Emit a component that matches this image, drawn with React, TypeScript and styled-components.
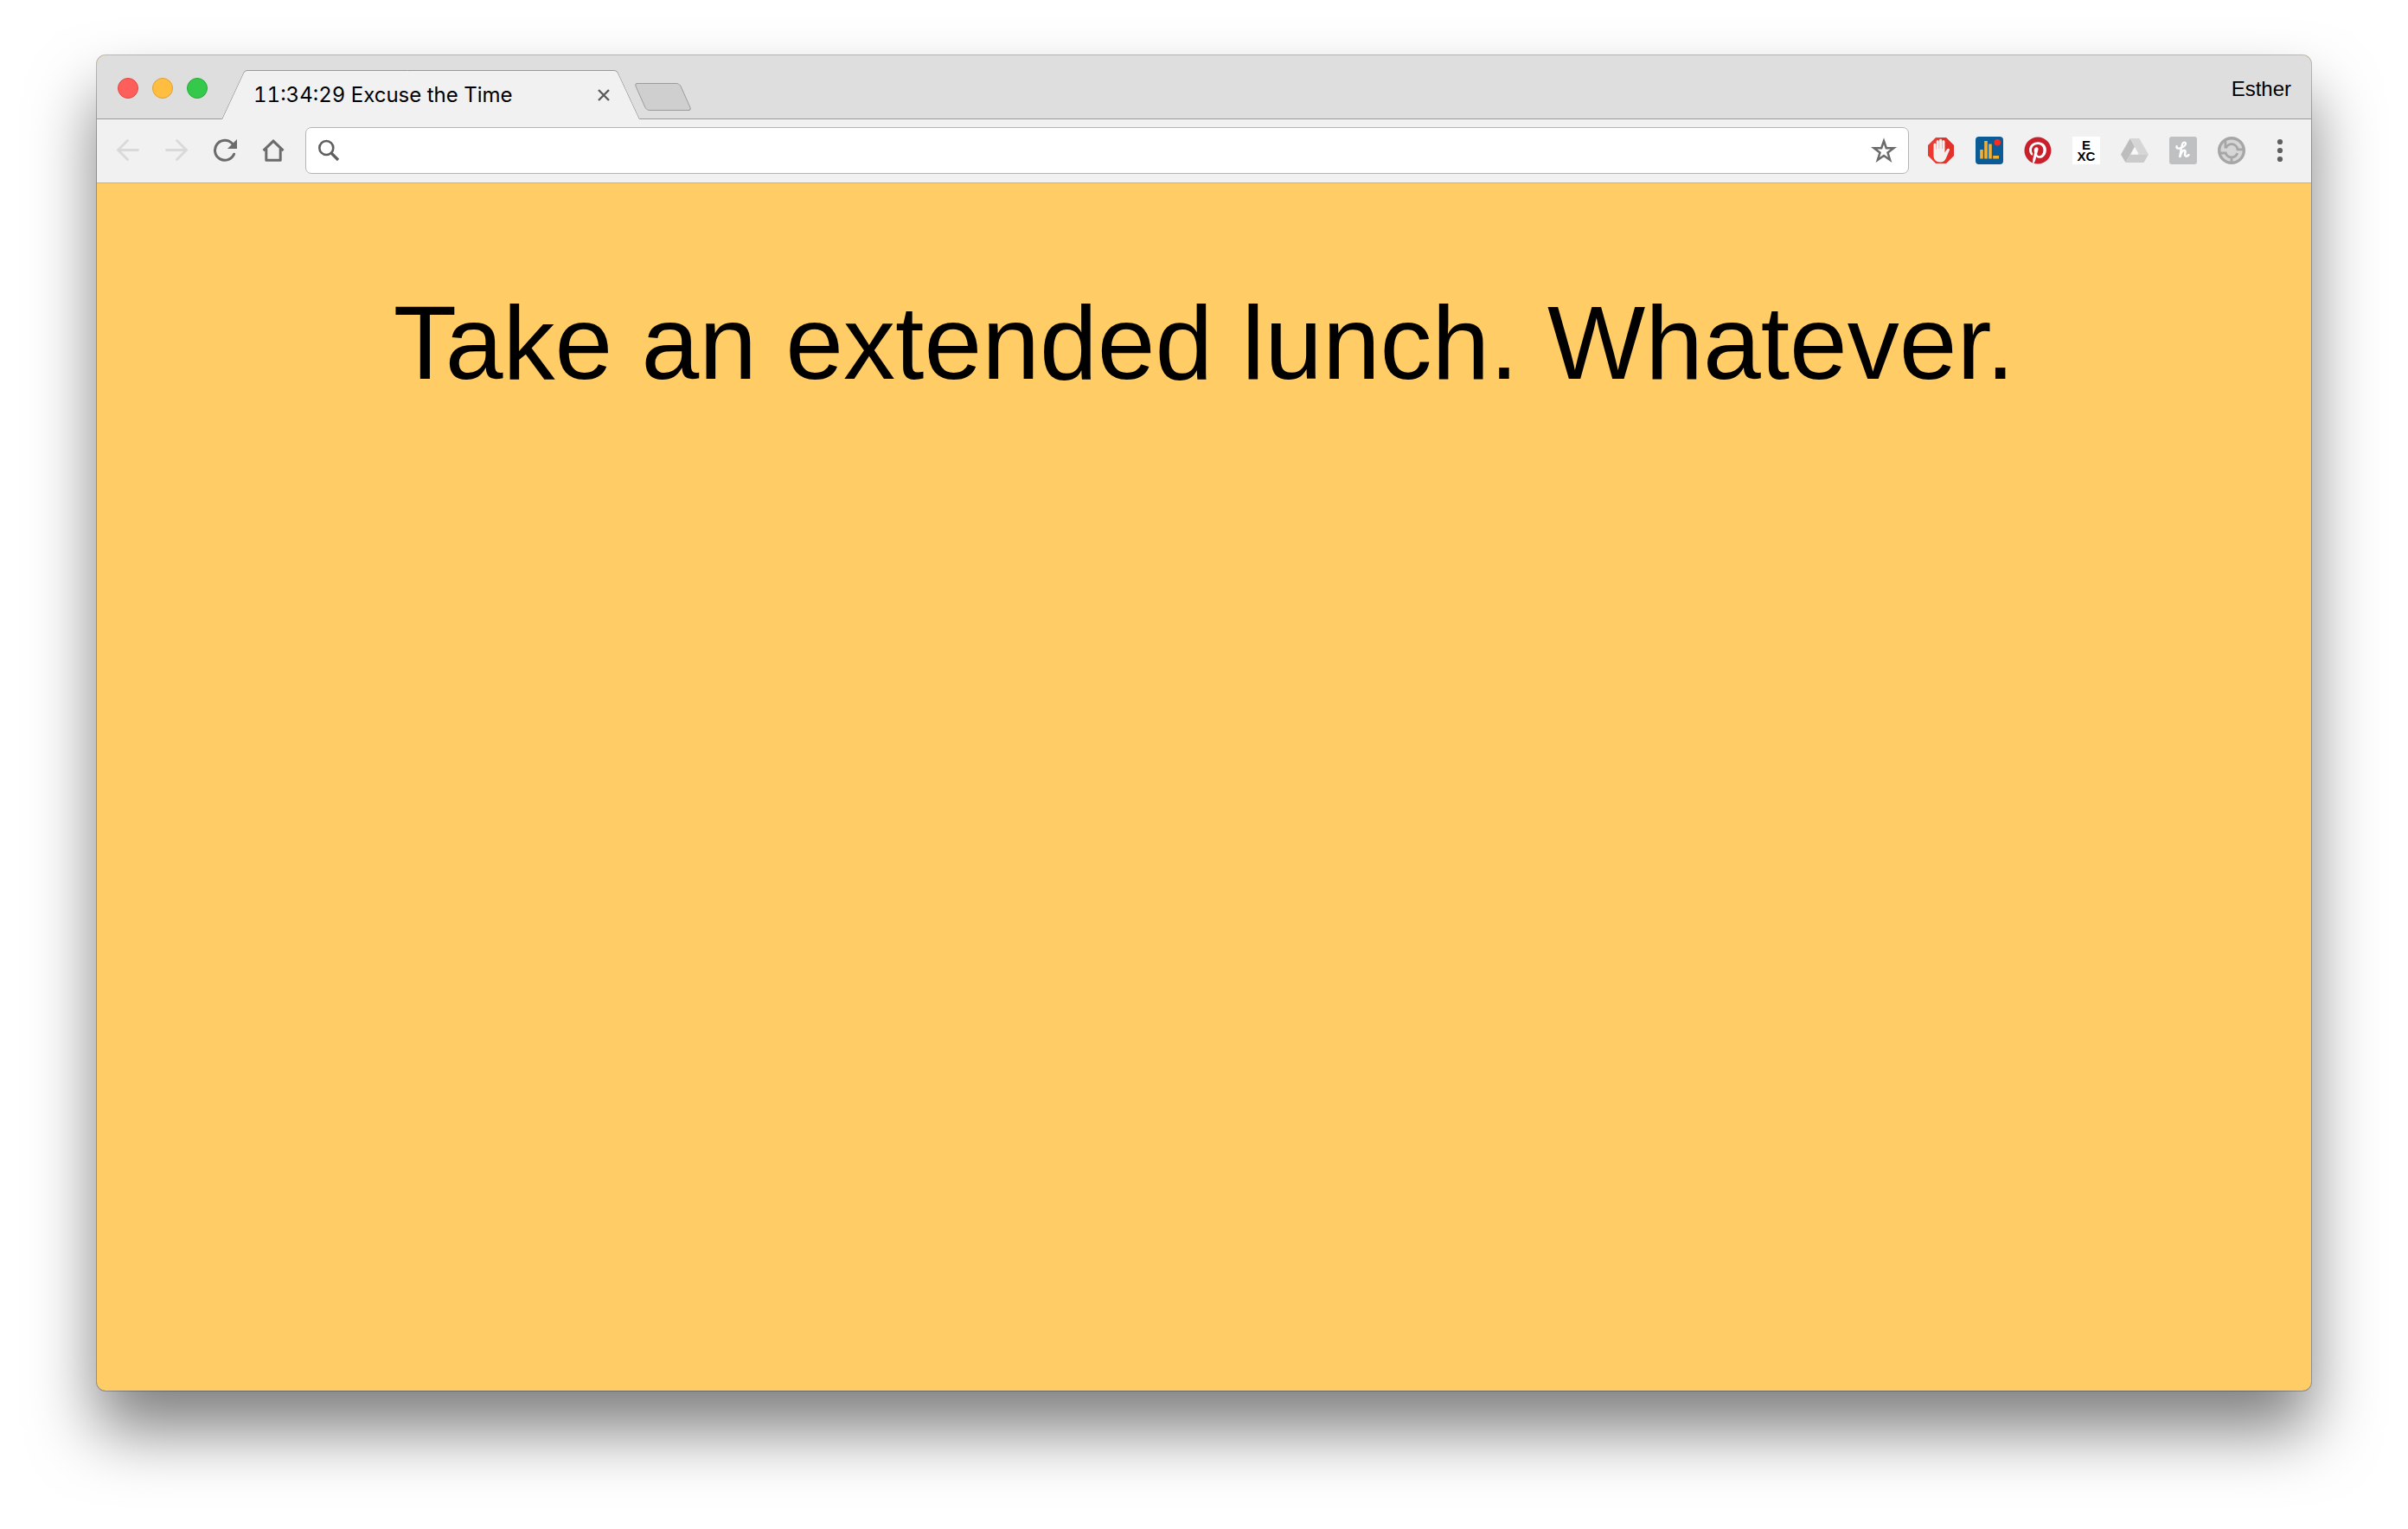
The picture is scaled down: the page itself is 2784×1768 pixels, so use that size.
import React from "react";
import styled, { createGlobalStyle } from "styled-components";
import { FaPinterest } from "react-icons/fa";

const GlobalStyle = createGlobalStyle`
  *, *::before, *::after { box-sizing: border-box; }
  body { margin: 0; background: #fff; }
  button { padding: 0; border: 0; background: none; color: inherit; font: inherit; cursor: pointer; }
`;

const Desktop = styled.div`
  display: flex;
  flex-direction: column;
  min-height: 100vh;
  padding: 64px 112px 160px;
  font-family: "Liberation Sans", Arial, sans-serif;
`;

const BrowserWindow = styled.main`
  flex: 1;
  display: flex;
  flex-direction: column;
  border-radius: 10px;
  background: #ffcc66;
  box-shadow:
    0 0 0 1px rgba(0, 0, 0, 0.26),
    0 46px 76px rgba(0, 0, 0, 0.5);
`;

const TabStrip = styled.header`
  display: flex;
  align-items: flex-end;
  height: 74px;
  padding: 0 23px 0 24px;
  border-bottom: 1px solid #999;
  border-radius: 10px 10px 0 0;
  background: #dedede;
`;

const WindowControls = styled.div`
  display: flex;
  align-self: center;
  gap: 16px;
  margin: 2px 16px 0 0;
`;

const WindowControl = styled.button<{ $fill: string; $edge: string }>`
  width: 24px;
  height: 24px;
  border: 1px solid ${(p) => p.$edge};
  border-radius: 50%;
  background: ${(p) => p.$fill};
`;

const Tab = styled.div`
  position: relative;
  isolation: isolate;
  display: flex;
  align-items: center;
  justify-content: space-between;
  width: 484px;
  height: 57px;
  margin-bottom: -1px;
  padding: 0 34px 0 37px;

  &::before,
  &::after {
    content: "";
    position: absolute;
    z-index: -1;
    top: 0;
    bottom: 0;
    width: 50%;
    border-top: 1px solid #999;
    background: #f1f1f1;
    transform-origin: bottom;
  }
  &::before {
    left: 0;
    border-left: 1px solid #999;
    border-top-left-radius: 4px;
    transform: skewX(-25deg);
  }
  &::after {
    right: 0;
    border-right: 1px solid #999;
    border-top-right-radius: 4px;
    transform: skewX(25deg);
  }
`;

const TabTitle = styled.span`
  font: 400 24px/32px Inter, sans-serif;
  font-variant-numeric: tabular-nums;
  white-space: nowrap;
  color: #000;
`;

const TabClose = styled.button`
  display: flex;
  width: 16px;
  height: 16px;
`;

const NewTab = styled.button`
  align-self: center;
  width: 53px;
  height: 32px;
  margin-top: 22px;
  border: 1px solid #9c9c9c;
  border-radius: 4px;
  background: #cfcfcf;
  transform: skewX(24deg);
`;

const Profile = styled.button`
  align-self: center;
  margin: 4px 0 0 auto;
  font-size: 24px;
  line-height: 28px;
  color: #000;
`;

const Toolbar = styled.div`
  display: flex;
  align-items: center;
  gap: 21px;
  padding: 9px 20px 10px;
  border-bottom: 1px solid #b0b0b0;
  background: #f1f1f1;
`;

const IconRow = styled.div`
  display: flex;
  gap: 24px;
`;

const IconButton = styled.button<{ $color?: string; $bg?: string }>`
  display: flex;
  align-items: center;
  justify-content: center;
  width: 32px;
  height: 32px;
  color: ${(p) => p.$color ?? "#6b6b6b"};
  background: ${(p) => p.$bg ?? "transparent"};
`;

const AddressBar = styled.form`
  flex: 1;
  display: flex;
  align-items: center;
  height: 54px;
  padding: 0 12px 0 10px;
  border: 1px solid #b5b5b5;
  border-radius: 7px;
  background: #fff;
`;

const AddressInput = styled.input`
  flex: 1;
  height: 100%;
  margin: 0 8px;
  border: 0;
  outline: 0;
  background: transparent;
  font: 24px/32px "Liberation Sans", Arial, sans-serif;
`;

const ExcBadge = styled.span`
  font-size: 15px;
  font-weight: 700;
  line-height: 13px;
  text-align: center;
  color: #000;
`;

const Page = styled.section`
  flex: 1;
  padding: 116px 32px;
`;

const Excuse = styled.h1`
  margin: 0;
  font-size: 120px;
  font-weight: 400;
  line-height: 136px;
  text-align: center;
  color: #000;
`;

const Glyph = ({ children, size = 32 }: { children: React.ReactNode; size?: number }) => (
  <svg width={size} height={size} viewBox={`0 0 ${size} ${size}`} fill="none" aria-hidden="true">
    {children}
  </svg>
);

const BackIcon = () => (
  <Glyph>
    <path d="M15.5 4.5 4.5 15.5l11 11M5 15.5h22.5" stroke="currentColor" strokeWidth="2.8" strokeLinecap="round" />
  </Glyph>
);

const ForwardIcon = () => (
  <Glyph>
    <path d="m16.5 4.5 11 11-11 11M27 15.5H4.5" stroke="currentColor" strokeWidth="2.8" strokeLinecap="round" />
  </Glyph>
);

const ReloadIcon = () => (
  <Glyph>
    <path d="M26.6 20.2A11.5 11.5 0 1 1 24.5 8" stroke="currentColor" strokeWidth="3" strokeLinecap="round" />
    <path d="M30 3v11H19z" fill="currentColor" />
  </Glyph>
);

const HomeIcon = () => (
  <Glyph>
    <path d="M4.5 16.2 16 5.2l11.5 11" stroke="currentColor" strokeWidth="3" />
    <path d="M7.8 14v13.2h16.4V14" stroke="currentColor" strokeWidth="3" strokeLinejoin="round" />
  </Glyph>
);

const SearchIcon = () => (
  <Glyph>
    <circle cx="13.3" cy="13" r="8" stroke="#5f5f5f" strokeWidth="2.6" />
    <path d="m19 19 8 8" stroke="#5f5f5f" strokeWidth="3.2" />
  </Glyph>
);

const StarIcon = () => (
  <Glyph>
    <path
      d="m16 5 2.8 8.2h8.6l-6.9 5.3 2.6 8.5-7.1-5-7.1 5 2.6-8.5-6.9-5.3h8.6z"
      stroke="currentColor"
      strokeWidth="2.5"
    />
  </Glyph>
);

const CloseIcon = () => (
  <Glyph size={16}>
    <path d="m2 2 12 12M14 2 2 14" stroke="#5a5a5a" strokeWidth="2.4" />
  </Glyph>
);

const BlockerIcon = () => (
  <Glyph>
    <path d="M10 1h12l9 9v12l-9 9H10l-9-9V10z" fill="#ec3a31" />
    <path d="M16 1h6l9 9v12l-9 9h-6z" fill="#d72b25" opacity=".45" />
    <path
      d="M7.5 9c0-1.700 2.900-1.700 2.900 0v5.500h.3V5.500c0-1.800 3.100-1.800 3.100 0v8.500h.3V4.200c0-1.800 3.100-1.800 3.100 0V14h.3V5.500c0-1.800 3-1.800 3 0v13l2.500-4c1.200-1.600 3.700-.7 2.900 1l-3.900 9.200c-1.200 3-3.200 4.800-6.500 4.800-5.600 0-8-3.200-8-8z"
      fill="#f3f0ee"
    />
  </Glyph>
);

const AnalyticsIcon = () => (
  <Glyph>
    <rect width="32" height="32" rx="4" fill="#0b5c96" />
    <path d="M5.2 15h3.6v10.5H5.2zM10.2 5h3.6v20.5h-3.6zM15.2 8.5h3.6v17h-3.6zM20.2 22H27v3.5h-6.8z" fill="#f6ae2d" />
    <circle cx="25.3" cy="6.7" r="3.7" fill="#fb2b1d" />
  </Glyph>
);

const DriveIcon = () => (
  <Glyph>
    <path d="M10.7 2 0 20.5 5.5 30 16 11.5z" fill="#bdbdbd" />
    <path d="M10.7 2h10.6L32 20.500H21z" fill="#d6d6d6" />
    <path d="M11 20.5h21L26.5 30h-21z" fill="#cbcbcb" />
    <path d="m16 13.2 4.2 7.3h-8.4z" fill="#fafafa" />
  </Glyph>
);

const HoneyIcon = () => (
  <Glyph>
    <rect width="32" height="32" rx="3" fill="#bec0c2" />
    <path
      d="M8.6 11.200c-.6 2.600 2.200 2.900 4.800 2 3.400-1.200 5.800-3.600 5.600-5.200-.3-1.800-3-2-3.900.8-.9 3-2.100 9.400-2.800 14.200"
      stroke="#fff"
      strokeWidth="2.3"
      strokeLinecap="round"
    />
    <path
      d="M12.600 22.500c1-4 3.200-7 5-6.700 1.700.3.8 2.700.5 4.600-.4 2.700 2.200 3 4.400.7"
      stroke="#fff"
      strokeWidth="2.5"
      strokeLinecap="round"
    />
  </Glyph>
);

const RingIcon = () => (
  <Glyph>
    <circle cx="16" cy="16" r="14.3" fill="#d6d6d6" stroke="#a6a6a6" strokeWidth="3.4" />
    <path d="M8.9 4.5v9M9.400 13.500a7 7 0 0 1 13.600 1.300h6.500" stroke="#a6a6a6" strokeWidth="2.8" />
    <path d="M2.500 19h6.700a7.200 7.200 0 0 0 13.600 0M16 23.500V30" stroke="#a6a6a6" strokeWidth="2.8" />
  </Glyph>
);

const MenuIcon = () => (
  <Glyph>
    <circle cx="16" cy="6" r="3.1" fill="#5f5f5f" />
    <circle cx="16" cy="16" r="3.1" fill="#5f5f5f" />
    <circle cx="16" cy="26" r="3.1" fill="#5f5f5f" />
  </Glyph>
);

const PinterestIcon = () => (
  <Glyph>
    <circle cx="16" cy="16" r="15" fill="#fff" />
    <FaPinterest size={32} color="#c9202b" />
  </Glyph>
);

export default function App() {
  return (
    <>
      <GlobalStyle />
      <Desktop>
        <BrowserWindow>
          <TabStrip>
            <WindowControls>
              <WindowControl aria-label="Close window" $fill="#ff5f5a" $edge="#e2463f" />
              <WindowControl aria-label="Minimize window" $fill="#ffbe40" $edge="#dfa033" />
              <WindowControl aria-label="Zoom window" $fill="#34c94a" $edge="#24aa35" />
            </WindowControls>
            <Tab>
              <TabTitle>11:34:29 Excuse the Time</TabTitle>
              <TabClose aria-label="Close tab"><CloseIcon /></TabClose>
            </Tab>
            <NewTab aria-label="New tab" />
            <Profile>Esther</Profile>
          </TabStrip>
          <Toolbar>
            <IconRow>
              <IconButton aria-label="Back" $color="#d9d9d9"><BackIcon /></IconButton>
              <IconButton aria-label="Forward" $color="#d9d9d9"><ForwardIcon /></IconButton>
              <IconButton aria-label="Reload"><ReloadIcon /></IconButton>
              <IconButton aria-label="Home"><HomeIcon /></IconButton>
            </IconRow>
            <AddressBar onSubmit={(e) => e.preventDefault()}>
              <SearchIcon />
              <AddressInput type="text" aria-label="Address and search bar" />
              <IconButton type="button" aria-label="Bookmark this page"><StarIcon /></IconButton>
            </AddressBar>
            <IconRow>
              <IconButton aria-label="Ad blocker"><BlockerIcon /></IconButton>
              <IconButton aria-label="Analytics"><AnalyticsIcon /></IconButton>
              <IconButton aria-label="Pinterest"><PinterestIcon /></IconButton>
              <IconButton aria-label="Excuse the Time" $bg="#fff">
                <ExcBadge>E<br />XC</ExcBadge>
              </IconButton>
              <IconButton aria-label="Drive"><DriveIcon /></IconButton>
              <IconButton aria-label="Honey"><HoneyIcon /></IconButton>
              <IconButton aria-label="Extension"><RingIcon /></IconButton>
              <IconButton aria-label="Menu"><MenuIcon /></IconButton>
            </IconRow>
          </Toolbar>
          <Page>
            <Excuse>Take an extended lunch. Whatever.</Excuse>
          </Page>
        </BrowserWindow>
      </Desktop>
    </>
  );
}
